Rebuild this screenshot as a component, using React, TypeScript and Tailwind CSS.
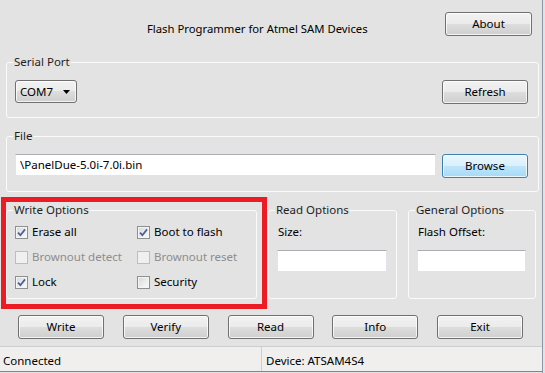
import * as React from 'react';

const btnBase =
  'flex items-center justify-center rounded-[3px] border text-[11.5px] text-black shadow-[inset_0_0_0_1px_rgba(255,255,255,0.75)]';
const btnNormal =
  'border-[#707070] bg-[linear-gradient(#f2f2f2_0%,#ebebeb_50%,#dddddd_50%,#cfcfcf_100%)]';
const btnFocused =
  'border-[#3c7fb1] bg-[linear-gradient(#eaf6fd_0%,#d9f0fc_50%,#bee6fd_50%,#a7d9f5_100%)]';

function Button({
  label,
  w = 'w-[86px]',
  focused,
}: {
  label: string;
  w?: string;
  focused?: boolean;
}) {
  return (
    <button className={`${btnBase} ${focused ? btnFocused : btnNormal} ${w} h-[24px]`}>
      {label}
    </button>
  );
}

function Group({
  title,
  className,
  children,
}: {
  title: string;
  className?: string;
  children: React.ReactNode;
}) {
  return (
    <fieldset className={`rounded-[3px] border border-[#fbfbfb] pl-[8px] ${className ?? ''}`}>
      <legend className="ml-[-2px] px-[1px] text-[11.5px] leading-[16px] text-[#1e1e1e]">
        {title}
      </legend>
      {children}
    </fieldset>
  );
}

function Checkbox({
  label,
  checked,
  disabled,
}: {
  label: string;
  checked?: boolean;
  disabled?: boolean;
}) {
  return (
    <label className="flex h-[16px] items-center gap-[4px]">
      <span
        className={`flex h-[13px] w-[13px] items-center justify-center border ${
          disabled
            ? 'border-[#bdbdbd] bg-[#f0f0f0]'
            : 'border-[#8e8f8f] bg-[linear-gradient(135deg,#d6d8db,#fcfcfc)] shadow-[inset_0_0_0_1px_#f4f4f4]'
        }`}
      >
        {checked && (
          <svg width="9" height="9" viewBox="0 0 9 9">
            <path d="M1 4.6 L3.4 7.2 L8 1.4" fill="none" stroke="#4a5f97" strokeWidth="1.7" />
          </svg>
        )}
      </span>
      <span className={disabled ? 'text-[#8d8d8d]' : 'text-black'}>{label}</span>
    </label>
  );
}

function TextBox({ value, className }: { value?: string; className?: string }) {
  return (
    <div
      className={`flex h-[22px] items-center border border-[#e2e3ea] border-t-[#abadb3] bg-white pl-[4px] text-[11.5px] text-black ${className ?? ''}`}
    >
      {value}
    </div>
  );
}

export default function App() {
  return (
    <div className="relative h-[373px] w-[545px] overflow-hidden bg-[#e3e3e3] font-['Noto_Sans','Liberation_Sans',sans-serif] text-[11.5px] text-black">
      <div className="flex h-full w-[543px] flex-col border-r border-[#8c98a6]">
        {/* Header */}
        <div className="flex items-start pl-[147px] pr-[10px] pt-[12px]">
          <div className="mt-[9px] flex-1 text-[11.3px] leading-[16px]">Flash Programmer for Atmel SAM Devices</div>
          <Button label="About" w="w-[87px]" />
        </div>

        <div className="flex flex-col px-[6px]">
          {/* Serial Port */}
          <Group title="Serial Port" className="mt-[17px] w-[533px] pb-[13px] pr-[10px]">
            <div className="mt-[10px] flex items-start justify-between">
              <div
                className={`${btnNormal} flex h-[23px] w-[62px] items-center justify-between rounded-[3px] border pl-[4px] pr-[6px] shadow-[inset_0_0_0_1px_rgba(255,255,255,0.75)]`}
              >
                <span>COM7</span>
                <svg width="7" height="4" viewBox="0 0 7 4">
                  <path d="M0 0 H7 L3.5 4 Z" fill="#000" />
                </svg>
              </div>
              <Button label="Refresh" />
            </div>
          </Group>

          {/* File */}
          <Group title="File" className="mt-[10px] w-[533px] pb-[13px] pr-[10px]">
            <div className="mt-[10px] flex items-start gap-[6px]">
              <TextBox value="\PanelDue-5.0i-7.0i.bin" className="w-[421px]" />
              <Button label="Browse" focused />
            </div>
          </Group>

          {/* Options */}
          <div className="mt-[10px] flex items-stretch gap-[11px]">
            <Group title="Write Options" className="w-[253px] pb-[8px]">
              <div className="mt-[6px] grid grid-cols-[122px_1fr] gap-y-[9px]">
                <Checkbox label="Erase all" checked />
                <Checkbox label="Boot to flash" checked />
                <Checkbox label="Brownout detect" disabled />
                <Checkbox label="Brownout reset" disabled />
                <Checkbox label="Lock" checked />
                <Checkbox label="Security" />
              </div>
            </Group>
            <Group title="Read Options" className="w-[129px] pr-[9px]">
              <div className="mt-[6px] pl-[1px] leading-[16px]">Size:</div>
              <TextBox className="mt-[10px] w-[110px]" />
            </Group>
            <Group title="General Options" className="w-[129px] pr-[9px]">
              <div className="mt-[6px] pl-[1px] leading-[16px]">Flash Offset:</div>
              <TextBox className="mt-[10px] w-[109px]" />
            </Group>
          </div>
        </div>

        {/* Action buttons */}
        <div className="mt-[16px] flex justify-between pl-[18px] pr-[19px]">
          <Button label="Write" w="w-[86px]" />
          <Button label="Verify" w="w-[86px]" />
          <Button label="Read" w="w-[86px]" />
          <Button label="Info" w="w-[86px]" />
          <Button label="Exit" w="w-[86px]" />
        </div>

        {/* Status bar */}
        <div className="mt-auto flex h-[26px] border-y border-b-[#7b8795] border-t-[#cdcdcd] bg-[#f0efed]">
          <div className="flex w-[262px] items-center border-r border-[#cfcfcf] pl-[3px] pt-[3px]">Connected</div>
          <div className="flex items-center pl-[4px] pt-[3px]">Device: ATSAM4S4</div>
        </div>
        <div className="h-[1px]" />
      </div>

      {/* highlight annotation */}
      <div className="pointer-events-none absolute left-[1px] top-[197px] h-[112px] w-[266px] border-[5px] border-[#ed1c24]" />
    </div>
  );
}
